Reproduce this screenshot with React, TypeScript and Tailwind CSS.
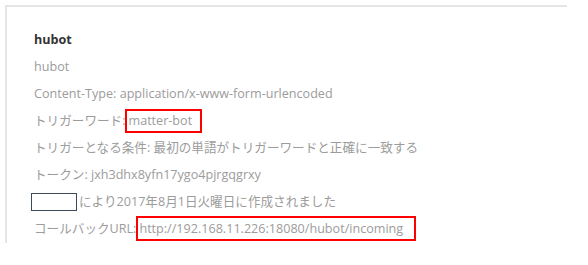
export default function App() {
  return (
    <div className="h-[265px] w-[588px] bg-white pl-[5px] pt-[5px] font-['Open_Sans','Noto_Sans_CJK_JP',sans-serif]">
      <div className="h-[238px] w-[562px] border-l-2 border-t-2 border-[#e5e5e5] pl-[27px] pt-[19px] text-[12.6px] leading-[27px] text-[#9c9c9c]">
        <div className="font-bold text-[#333]">hubot</div>
        <div>hubot</div>
        <div>Content-Type: application/x-www-form-urlencoded</div>
        <div className="flex items-center">
          <span>トリガーワード:</span>
          <span className="inline-block border-2 border-[#f00] pl-[1px] pr-[8px] leading-[20px]">matter-bot</span>
        </div>
        <div>トリガーとなる条件: 最初の単語がトリガーワードと正確に一致する</div>
        <div>トークン: jxh3dhx8yfn17ygo4pjrgqgrxy</div>
        <div className="-ml-[3px] flex items-center">
          <span className="mr-[2px] inline-block h-[18px] w-[46px] border border-[#3d4a5a] bg-white" />
          により2017年8月1日火曜日に作成されました
        </div>
        <div className="flex items-center">
          <span>コールバックURL:</span>
          <span className="inline-block border-2 border-[#f00] pl-[1px] pr-[11px] leading-[21px]">http://192.168.11.226:18080/hubot/incoming</span>
        </div>
      </div>
    </div>
  );
}
